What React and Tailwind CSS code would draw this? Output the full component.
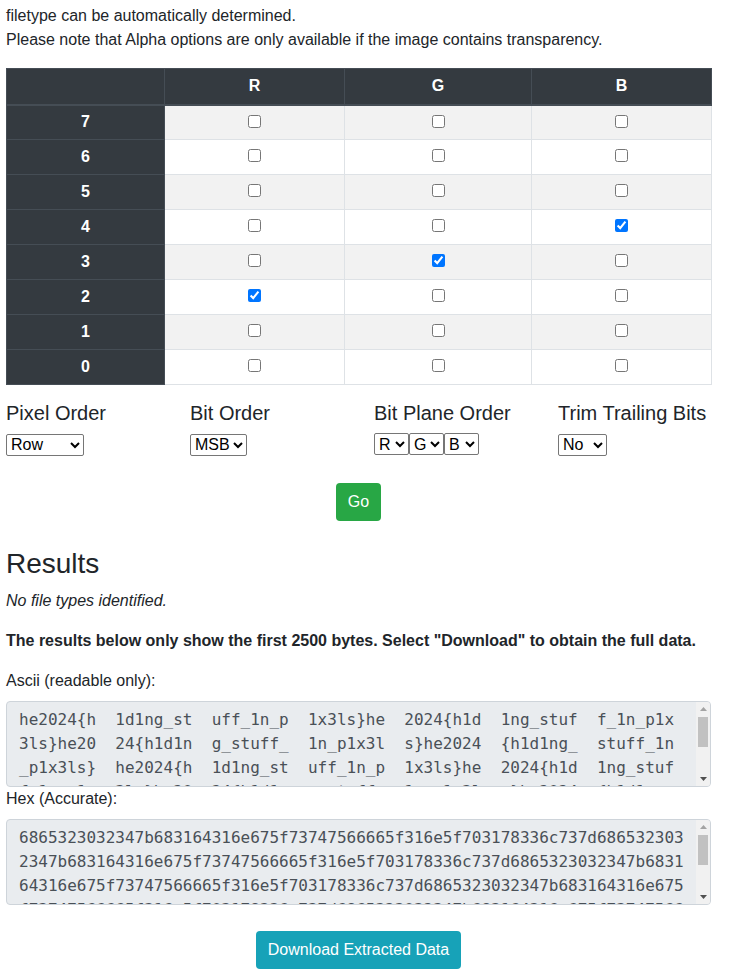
import React from "react";

const REP = "he2024{h1d1ng_stuff_1n_p1x3ls}";
const raw = REP.repeat(40);
const chunks = [];
for (let i = 0; i < raw.length; i += 8) chunks.push(raw.slice(i, i + 8));
const ascii = chunks.join("  ");
const hex = Array.from(raw)
  .map((c) => c.charCodeAt(0).toString(16).padStart(2, "0"))
  .join("");

const checked = { "4-B": true, "3-G": true, "2-R": true };

function FakeScrollbar() {
  return (
    <div className="absolute right-[1px] top-[1px] bottom-[1px] w-[14px] bg-[#f1f1f1] rounded-tr-[3px] rounded-br-[3px] flex flex-col items-center">
      <div className="h-[14px] w-full flex items-center justify-center">
        <svg width="7" height="4" viewBox="0 0 7 4">
          <path d="M3.5 0 L7 4 L0 4 Z" fill="#a3a3a3" />
        </svg>
      </div>
      <div className="w-[10px] h-[30px] bg-[#c1c1c1] mt-px"></div>
      <div className="flex-1"></div>
      <div className="h-[14px] w-full flex items-center justify-center">
        <svg width="7" height="4" viewBox="0 0 7 4">
          <path d="M0 0 L7 0 L3.5 4 Z" fill="#505050" />
        </svg>
      </div>
    </div>
  );
}

function Area({ value }) {
  return (
    <div className="relative w-[705px] h-[86px]">
      <textarea
        readOnly
        value={value}
        className="block w-[705px] h-[86px] bg-[#e9ecef] border border-[#ced4da] rounded-[4px] pl-3 pr-[25px] py-[6px] font-['DejaVu_Sans_Mono',monospace] text-base leading-6 text-[#495057] resize-none overflow-hidden break-all"
      />
      <FakeScrollbar />
    </div>
  );
}

const selectCls =
  "h-[22px] border border-[#767676] rounded-[2px] bg-white text-black";

export default function App() {
  const bits = [7, 6, 5, 4, 3, 2, 1, 0];
  return (
    <div className="font-['Liberation_Sans',Arial,sans-serif] text-[#212529] text-base leading-6 bg-white min-h-[971px]">
      <div className="ml-[6px] w-[705px] pt-[4px]">
        <p className="mb-4">
          filetype can be automatically determined.
          <br />
          Please note that Alpha options are only available if the image contains transparency.
        </p>

        <table className="w-[705px] table-fixed border-collapse mb-4">
          <colgroup>
            <col className="w-[158px]" />
            <col className="w-[180px]" />
            <col className="w-[187px]" />
            <col className="w-[180px]" />
          </colgroup>
          <thead>
            <tr className="h-[36px]">
              <th className="bg-[#343a40] text-white border border-[#454d55] border-b-2"></th>
              <th className="bg-[#343a40] text-white font-bold border border-[#454d55] border-b-2">R</th>
              <th className="bg-[#343a40] text-white font-bold border border-[#454d55] border-b-2">G</th>
              <th className="bg-[#343a40] text-white font-bold border border-[#454d55] border-b-2">B</th>
            </tr>
          </thead>
          <tbody>
            {bits.map((b, i) => (
              <tr key={b} className={"h-[35px] " + (i % 2 === 0 ? "bg-[#f2f2f2]" : "bg-white")}>
                <th className="bg-[#343a40] text-white font-bold border border-[#454d55]">{b}</th>
                {["R", "G", "B"].map((c) => (
                  <td key={c} className="border border-[#dee2e6] text-center align-middle p-0">
                    <input
                      type="checkbox"
                      defaultChecked={!!checked[b + "-" + c]}
                      className="align-middle relative top-[-2px]"
                    />
                  </td>
                ))}
              </tr>
            ))}
          </tbody>
        </table>

        <div className="flex">
          <div className="w-[184px]">
            <h5 className="text-[20px] leading-[24px] mb-2">Pixel Order</h5>
            <select className={"w-[78px] " + selectCls}>
              <option>Row</option>
              <option>Column</option>
            </select>
          </div>
          <div className="w-[184px]">
            <h5 className="text-[20px] leading-[24px] mb-2">Bit Order</h5>
            <select className={"w-[57px] " + selectCls}>
              <option>MSB</option>
              <option>LSB</option>
            </select>
          </div>
          <div className="w-[184px]">
            <h5 className="text-[20px] leading-[24px] mb-2">Bit Plane Order</h5>
            <div className="flex">
              <select className={"w-[35px] " + selectCls}>
                <option>R</option>
                <option>G</option>
                <option>B</option>
              </select>
              <select defaultValue="G" className={"w-[35px] " + selectCls}>
                <option>R</option>
                <option>G</option>
                <option>B</option>
              </select>
              <select defaultValue="B" className={"w-[35px] " + selectCls}>
                <option>R</option>
                <option>G</option>
                <option>B</option>
              </select>
            </div>
          </div>
          <div className="w-[153px]">
            <h5 className="text-[20px] leading-[24px] mb-2 whitespace-nowrap">Trim Trailing Bits</h5>
            <select className={"w-[49px] " + selectCls}>
              <option>No</option>
              <option>Yes</option>
            </select>
          </div>
        </div>

        <div className="flex justify-center mt-[26px]">
          <button className="bg-[#28a745] text-white rounded-[4px] px-3 h-[38px] leading-6">Go</button>
        </div>

        <h3 className="text-[28px] leading-[34px] mt-[26px] mb-2">Results</h3>
        <p className="italic mb-4">No file types identified.</p>
        <p className="font-bold mb-4">
          The results below only show the first 2500 bytes. Select "Download" to obtain the full data.
        </p>
        <label className="block mb-2">Ascii (readable only):</label>
        <Area value={ascii} />
        <label className="block mb-2">Hex (Accurate):</label>
        <Area value={hex} />
        <div className="flex justify-center mt-[26px]">
          <button className="bg-[#17a2b8] text-white rounded-[4px] px-3 h-[38px] leading-6">
            Download Extracted Data
          </button>
        </div>
      </div>
    </div>
  );
}
